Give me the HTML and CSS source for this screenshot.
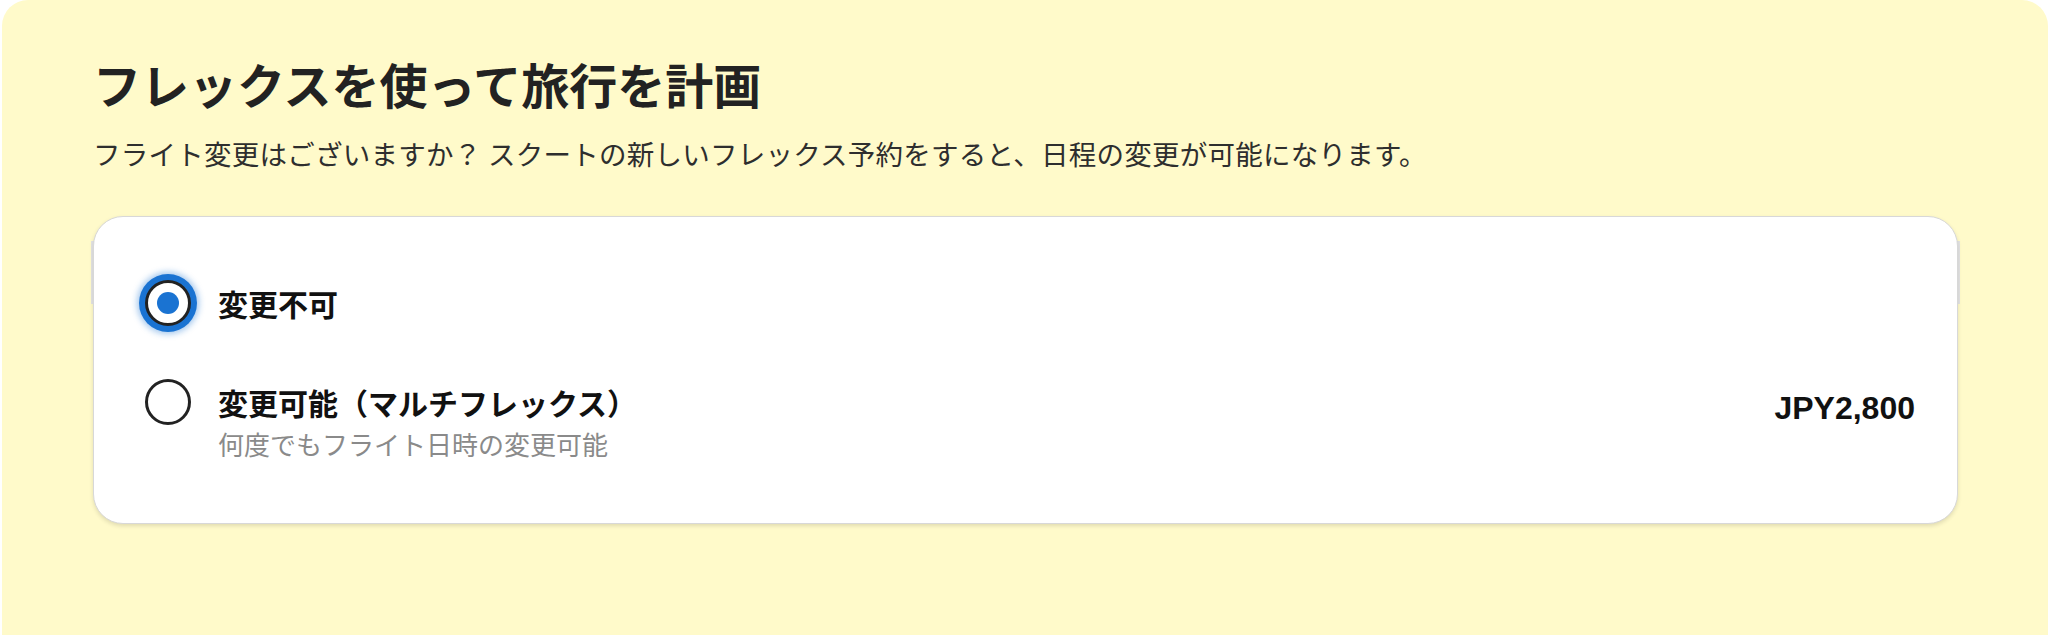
FILE: index.html
```html
<!DOCTYPE html>
<html lang="ja">
<head>
<meta charset="utf-8">
<title>フレックスを使って旅行を計画</title>
<link rel="stylesheet" href="styles.css">
</head>
<body>
<section class="panel">
  <h1 class="title">フレックスを使って旅行を計画</h1>
  <p class="subtitle">フライト変更はございますか？ スクートの新しいフレックス予約をすると、日程の変更が可能になります。</p>
  <div class="card">
    <label class="option">
      <span class="radio radio-on"></span>
      <span class="option-text">
        <span class="option-label">変更不可</span>
      </span>
    </label>
    <label class="option">
      <span class="radio"></span>
      <span class="option-text">
        <span class="option-label">変更可能（マルチフレックス）</span>
        <span class="option-sub">何度でもフライト日時の変更可能</span>
      </span>
      <span class="price">JPY2,800</span>
    </label>
  </div>
</section>
</body>
</html>
```

FILE: styles.css
```css
html, body {
  margin: 0;
  padding: 0;
  background: #ffffff;
}

body {
  font-family: "Noto Sans CJK JP", "Noto Sans", sans-serif;
  color: #222222;
}

.panel {
  position: relative;
  z-index: 0;
  box-sizing: border-box;
  margin-left: 2px;
  height: 635px;
  padding: 51px 90px 0 91px;
  background: #fffaca;
  border-radius: 26px 26px 0 0;
}

.title {
  margin: 0;
  font-size: 48px;
  line-height: 64px;
  font-weight: 700;
  color: #222222;
}

.subtitle {
  margin: 17px 0 0;
  font-size: 27.5px;
  letter-spacing: 0.25px;
  line-height: 42px;
  font-weight: 400;
  color: #2e2e2e;
}

.card {
  position: relative;
  margin-top: 42px;
  box-sizing: border-box;
  height: 308px;
  padding: 63px 42px 0 51px;
  background: #ffffff;
  border: 1px solid #d8d8d8;
  border-radius: 30px;
  box-shadow: 0 2px 4px rgba(0, 0, 0, 0.12);
  display: flex;
  flex-direction: column;
  gap: 53px;
}

.card::before {
  content: "";
  position: absolute;
  left: -3px;
  right: -3px;
  top: 24px;
  height: 63px;
  background: #e3e3e3;
  z-index: -1;
}

.option {
  display: flex;
  align-items: flex-start;
  gap: 27px;
}

.radio {
  flex: none;
  box-sizing: border-box;
  width: 46px;
  height: 46px;
  border: 3px solid #222222;
  border-radius: 50%;
  background: #ffffff;
  display: flex;
  align-items: center;
  justify-content: center;
}

.radio-on {
  box-shadow: 0 0 0 6px #1a73d2, 0 0 6px 8px rgba(26, 115, 210, 0.4);
}

.radio-on::after {
  content: "";
  width: 22px;
  height: 22px;
  border-radius: 50%;
  background: #1a73d2;
}

.option-text {
  flex: 1;
  display: flex;
  flex-direction: column;
}

.option-label {
  font-size: 30px;
  line-height: 46px;
  font-weight: 700;
  color: #111111;
}

.option-sub {
  margin-top: 1px;
  font-size: 26px;
  line-height: 36px;
  color: #8a8a8a;
}

.price {
  flex: none;
  margin-top: 6px;
  font-family: "Liberation Sans", Arial, sans-serif;
  font-size: 32px;
  line-height: 46px;
  font-weight: 700;
  color: #111111;
}
```
